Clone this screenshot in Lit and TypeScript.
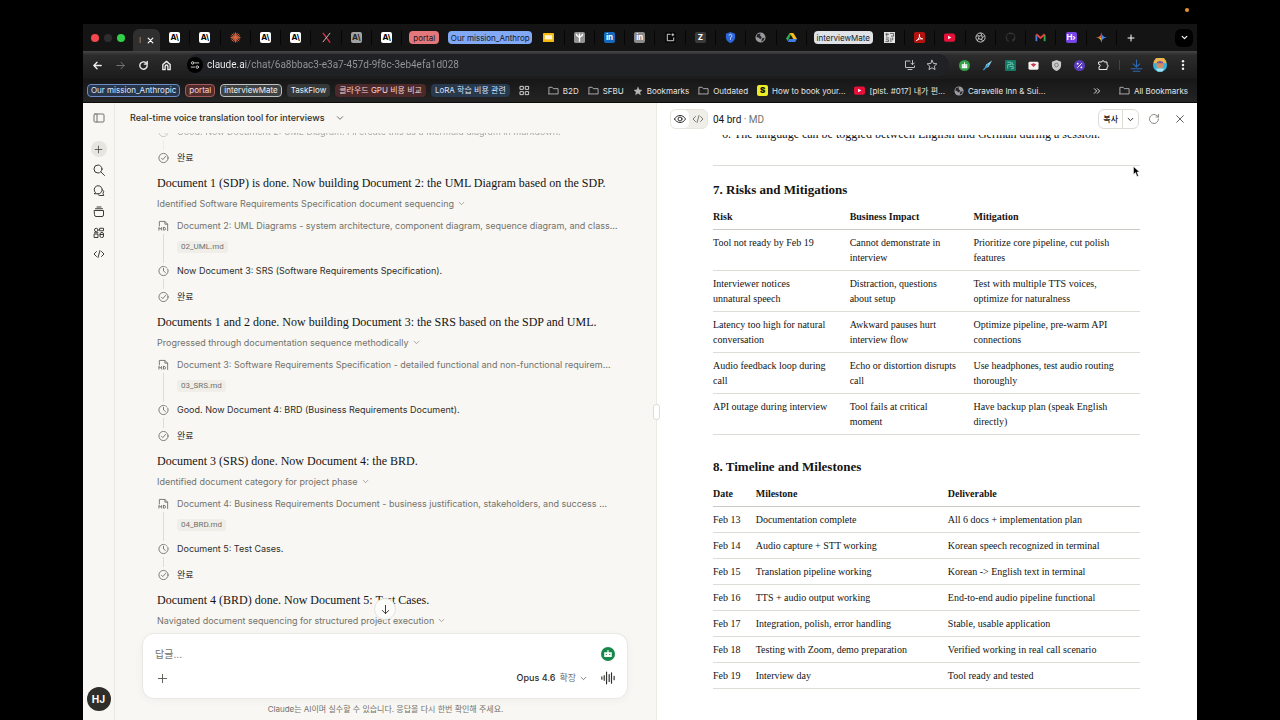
import { css, html, LitElement, svg, SVGTemplateResult, TemplateResult } from "lit";
import { customElement, property } from "lit/decorators.js";
import { classMap } from "lit/directives/class-map.js";

const shapes: Record<string, SVGTemplateResult> = {
  back: svg`<path d="M20 12H4M11 5l-7 7 7 7"/>`,
  forward: svg`<path d="M4 12h16M13 5l7 7-7 7"/>`,
  reload: svg`<path d="M20 12a8 8 0 1 1-2.4-5.7L20 8.5"/><path d="M20 3v6h-6"/>`,
  home: svg`<path d="M4 10l8-7 8 7v11h-5v-7a3 3 0 0 0-6 0v7H4z"/>`,
  tune: svg`<path d="M13 7h8M3 17h8"/><circle cx="6.500" cy="7" r="3"/><circle cx="17.500" cy="17" r="3"/>`,
  install: svg`<path d="M12 4H3v13h18v-3M8 21h8"/><path d="M17 3v8M13.500 8l3.500 3.500L20.500 8"/>`,
  star: svg`<path d="M12 2.500l2.900 6.400 6.900.7-5.200 4.700 1.500 6.900-6.100-3.600-6.100 3.600 1.500-6.900L2.200 9.600l6.900-.7z"/>`,
  starFull: svg`<path fill="currentColor" d="M12 3l2.800 6.200 6.700.7-5 4.500 1.400 6.600-5.900-3.400L6.100 21l1.400-6.600-5-4.500 6.700-.7z"/>`,
  puzzle: svg`<path d="M4 6h5.500a2.500 2.500 0 0 1 5 0H20v5a2.800 2.800 0 0 1 0 5.500V21H4v-5.500a2.500 2.500 0 0 0 0-5z"/>`,
  download: svg`<path d="M12 2v12M6 9l6 6 6-6M2 18h20M6 22.500h12"/>`,
  dots: svg`<g fill="currentColor" stroke="none"><circle cx="12" cy="3" r="3"/><circle cx="12" cy="12" r="3"/><circle cx="12" cy="21" r="3"/></g>`,
  grid: svg`<rect x="3" y="3" width="6.500" height="6.500"/><rect x="14.500" y="3" width="6.500" height="6.500"/><rect x="3" y="14.500" width="6.500" height="6.500"/><rect x="14.500" y="14.500" width="6.500" height="6.500"/>`,
  folder: svg`<path d="M2 19V5h7l2.500 3H22v11.500H2z"/>`,
  chevron: svg`<path d="M4 8l8 8 8-8"/>`,
  close: svg`<path d="M4 4l16 16M20 4L4 20"/>`,
  plus: svg`<path d="M12 3v18M3 12h18"/>`,
  more: svg`<path d="M4 5l7 7-7 7M13 5l7 7-7 7"/>`,
  panel: svg`<rect x="2" y="4" width="20" height="16" rx="2"/><path d="M8 4v16"/>`,
  search: svg`<circle cx="10" cy="10" r="8"/><path d="M16 16l7 7"/>`,
  chats: svg`<path d="M4.500 15A8 8 0 1 1 10 17.500H3z"/><path d="M18.500 9a6 6 0 0 1 1.500 8.500l1.500 3.500H14a6 6 0 0 1-4-2"/>`,
  projects: svg`<path d="M3 9h18v9a3 3 0 0 1-3 3H6a3 3 0 0 1-3-3zM5 5.500h14M8 2h8"/>`,
  artifacts: svg`<circle cx="6.500" cy="6" r="3.500"/><rect x="14" y="2.500" width="7" height="5"/><rect x="3" y="14" width="7" height="7"/><rect x="14" y="11" width="7" height="10" rx="3"/><path d="M3 11.500h7M14 15h7"/>`,
  code: svg`<path d="M7 7l-5 5 5 5M17 7l5 5-5 5M14 5l-4 14"/>`,
  check: svg`<circle cx="12" cy="12" r="10"/><path d="M7.500 12.500l3 3 6-7"/>`,
  clock: svg`<circle cx="12" cy="12" r="10" stroke-dasharray="48 3 3 3 3 3"/><path d="M12 6v6l4 3"/>`,
  file: svg`<path d="M3 12V2h12l6 6v14M15 2v6h6"/><path d="M2 21v-6l3 4 3-4v6M12 15v6h1.500a3 3 0 0 0 0-6z"/>`,
  down: svg`<path d="M12 3v18M5 14l7 7 7-7"/>`,
  eye: svg`<path d="M1 12c5-9.500 17-9.500 22 0-5 9.500-17 9.500-22 0z"/><circle cx="12" cy="12" r="4"/>`,
  wave: svg`<path d="M1.500 10v4M5.500 8v8M9.500 2v20M14 6v12M18 3v18M22.500 9v6"/>`,
  refresh: svg`<path d="M21 12a9 9 0 1 1-3-6.700L21 8"/><path d="M21 3v5h-5"/>`
};

const icon = (name: string, size = 12, weight = 2) => html`
  <svg width=${size} height=${size} viewBox="0 0 24 24" fill="none" stroke="currentColor"
    stroke-width=${weight} stroke-linecap="round" stroke-linejoin="round" aria-hidden="true">${shapes[name]}</svg>
`;

const logos: Record<string, SVGTemplateResult> = {
  burst: svg`<path stroke="#d9683f" stroke-width="2" d="M12 1v22M1 12h22M4 4l16 16M20 4L4 20M8 2l8 20M16 2L8 22M2 8l20 8M22 8L2 16"/>`,
  cross: svg`<path stroke="#e5304c" stroke-width="3" d="M4 2l16 21"/><path stroke="#d8c9cc" stroke-width="2" d="M20 2L4 22"/>`,
  slides: svg`<rect x="0" y="2" width="24" height="20" rx="2" fill="#f5b912"/><rect x="4" y="7" width="16" height="9" fill="#fff6d8"/>`,
  fork: svg`<rect width="24" height="24" rx="4" fill="#929292"/><path stroke="#fff" stroke-width="3" d="M5 4c0 7 7 4 7 9v8M19 4c0 7-7 4-7 9M12 3v8"/>`,
  note: svg`<rect width="24" height="24" rx="4" fill="#090909"/><path stroke="#ddd" stroke-width="2" d="M12 5H5v14h14v-7M17 3v6M14 6h6"/>`,
  shield: svg`<path fill="#2d66d8" d="M12 0l10 4v8c0 6-5 10-10 12C7 22 2 18 2 12V4z"/><path stroke="#cfe0ff" stroke-width="2" d="M9 8a3 3 0 1 1 4 3l-1 3v3"/>`,
  globe: svg`<circle cx="12" cy="12" r="11" fill="#9b9b9f"/><path fill="#26262a" d="M5 5l7-2-1 5 4 3-3 5-5-4-4-1zM15 14l6-2-2 6-5 3z"/>`,
  drive: svg`<path fill="#2bab53" d="M8 2h4l-8 18-4-6z"/><path fill="#f9bd16" d="M8 2h8l8 13h-8z"/><path fill="#3e7de8" d="M7 15h17l-4 7H4z"/>`,
  qr: svg`<rect width="24" height="24" fill="#e4e4e4"/><path stroke="#555" stroke-width="2" d="M3 5h8M6 2v8M4 13h7M13 3h8v6h-6M15 13v9M19 12v6M4 17h6v4H3"/>`,
  acrobat: svg`<rect width="24" height="24" rx="4" fill="#b3120f"/><path stroke="#fff" stroke-width="2" d="M5 19c5-3 8-9 7-14-2 5 2 10 7 10-5-1-10 1-14 4z"/>`,
  youtube: svg`<rect y="3" width="24" height="18" rx="4" fill="#e6103b"/><path fill="#fff" d="M9 8l7 4-7 4z"/>`,
  openai: svg`<g stroke="#cfcfcf" stroke-width="2"><circle cx="12" cy="12" r="10"/><circle cx="12" cy="12" r="4"/><path d="M12 2l4 7M21 8l-5 5M19 19l-7-3M5 20l3-7M3 9l6-1"/></g>`,
  github: svg`<path fill="#34373a" d="M12 1a11 11 0 0 0-4 21v-4c-3 1-4-2-5-3 2 0 3 2 5 1-5-1-6-8-2-10V3c2 0 3 2 6 2s4-2 6-2v3c4 3 3 9-2 10v6a11 11 0 0 0-4-21z"/>`,
  gmail: svg`<path stroke="#3f7ee8" stroke-width="4" d="M3 20V6"/><path stroke="#34a853" stroke-width="4" d="M21 20V6"/><path stroke="#e94335" stroke-width="4" d="M3 5l9 8 9-8"/>`,
  gemini: svg`<path fill="#4587ef" d="M12 0c1 8 4 11 12 12-8 1-11 4-12 12z"/><path fill="#e9564a" d="M12 0C11 8 8 11 0 12h12z"/><path fill="#f2bd2e" d="M0 12c8 1 11 4 12 12V12z"/>`,
  bot: svg`<circle cx="12" cy="12" r="12" fill="#35a24a"/><path fill="#fff" d="M6 9h12v9H6zM11 5h2v4h-2z"/><path stroke="#35a24a" stroke-width="2" d="M9 12v2M15 12v2"/>`,
  feather: svg`<path fill="#8ed6ef" d="M22 1L9 10l-3 8 8-3z"/><path stroke="#3a93cf" stroke-width="3" d="M3 22l11-12"/>`,
  chip: svg`<rect width="24" height="24" rx="2" fill="#137764"/><path stroke="#74cdb9" stroke-width="2" d="M5 5h8v5H6v9M16 5v5h3M10 14h8v5h-5"/>`,
  mail: svg`<rect x="1" y="4" width="22" height="17" rx="3" fill="#f5f1f1"/><path fill="#c9344a" d="M6 9l6 6 6-6-6-2z"/>`,
  badge: svg`<path fill="#c6c8ca" d="M12 0l10 4v8c0 6-5 10-10 12C7 22 2 18 2 12V4z"/><circle cx="12" cy="11" r="4" stroke="#77797c" stroke-width="2"/>`,
  percent: svg`<circle cx="12" cy="12" r="12" fill="#5a3dbd"/><path stroke="#fff" stroke-width="2" d="M17 7L7 17"/><circle cx="8" cy="8" r="2" fill="#fff"/><circle cx="16" cy="16" r="2" fill="#fff"/>`,
  face: svg`<circle cx="12" cy="12" r="12" fill="#36b3dd"/><path fill="#e9b54d" d="M1 9a11 11 0 0 1 22 0z"/><circle cx="12" cy="12" r="6" fill="#d58c62"/><path fill="#7b4fa3" d="M6 9c2-5 10-5 12 0z"/><path fill="#a8e2f2" d="M5 18h14l-3 5H8z"/>`,
  robot: svg`<circle cx="12" cy="12" r="12" fill="#16884b"/><path fill="#fff" d="M5.500 9h13v8h-13zM11 5h2v4h-2z"/><path stroke="#16884b" stroke-width="2" d="M9 12v1.500M15 12v1.500"/>`
};

const logo = (name: string, size = 11) => html`
  <svg width=${size} height=${size} viewBox="0 0 24 24" fill="none" aria-hidden="true">${logos[name]}</svg>
`;

// letter marks are [text, class]; everything else is a key of `logos`
type Mark = string | [string, string];
const mark = (m: Mark) => typeof m === 'string' ? logo(m) : html`<span class="mark ${m[1]}">${m[0]}</span>`;

const tabs: Mark[][] = [
  [['A\\', 'white'], ['A\\', 'white'], 'burst', ['A\\', 'white'], ['A\\', 'white'], 'cross', ['A\\', 'grey'], ['A\\', 'white']],
  ['slides', 'fork', ['in', 'blue'], ['in', 'ash'], 'note', ['Z', 'dark'], 'shield', 'globe', 'drive'],
  ['qr', 'acrobat', 'youtube', 'openai', 'github', 'gmail', ['H›', 'violet'], 'gemini']
];

@customElement('browser-chrome')
export class BrowserChrome extends LitElement {
  static styles = css`
    :host {
      display: block;
      color: #dcdcdc;
      font: 8px/12px Inter, "Noto Sans CJK KR", sans-serif;
      border-bottom: 1px solid #0c0b08;
    }
    svg { display: block; flex: none; }
    button {
      font: inherit;
      color: inherit;
      background: none;
      border: 0;
      padding: 0;
      display: flex;
      align-items: center;
      justify-content: center;
    }
    .strip, .toolbar, .bookmarks { display: flex; align-items: center; }
    .strip { height: 27px; background: #141414; }
    .lights { display: flex; gap: 5px; width: 50px; padding-left: 8px; box-sizing: border-box; }
    .lights i { width: 8px; height: 8px; border-radius: 50%; background: #2d2d2d; }
    .lights .red { background: #f2474c; }
    .lights .green { background: #32d046; }
    .active {
      width: 27px;
      height: 22px;
      align-self: flex-end;
      background: #2f2f2f;
      border-radius: 6px 6px 0 0;
      display: flex;
      align-items: center;
      justify-content: space-evenly;
      color: #9a9a9a;
    }
    .active button { color: #fff; }
    .tab { flex: 1; height: 15px; border-right: 1px solid #060606; }
    .mark {
      width: 11px;
      height: 11px;
      border-radius: 2px;
      font: 700 8px/11px Inter, sans-serif;
      text-align: center;
      overflow: hidden;
    }
    .white { background: #fff; color: #000; }
    .grey { background: #a2a2a2; color: #222; }
    .blue { background: #1468bd; color: #fff; }
    .ash { background: #8b8b8b; color: #fff; }
    .dark { background: #383a3c; color: #fff; }
    .violet { background: #7445e5; color: #fff; }
    .yellow { background: #eded26; color: #111; font-weight: 900; }
    .group {
      height: 13px;
      margin: 0 2px 0 7px;
      border-radius: 4px;
      color: #17181a;
      background: #dfe2e6;
      width: 59px;
      white-space: nowrap;
    }
    .group.rose { background: #e4777c; width: 30px; }
    .group.sky { background: #81a9f6; width: 84px; }
    .new { width: 28px; color: #fff; }
    .search { width: 18px; height: 18px; margin: 0 4px 0 30px; border-radius: 6px; background: #000; color: #fff; }
    .toolbar {
      height: 28px;
      background: linear-gradient(#474747, #2c2c2c 4px, #1b1b1b);
      color: #ececec;
      box-sizing: border-box;
      padding: 0 3px;
    }
    .nav { width: 23px; }
    .dim { color: #7a7a7a; }
    .omnibox {
      flex: 1;
      display: flex;
      align-items: center;
      height: 22px;
      margin: 0 4px 0 9px;
      border-radius: 11px;
      background: #202124;
      padding-right: 8px;
      gap: 4px;
    }
    .site { width: 16px; height: 16px; border-radius: 50%; background: #000; }
    .omnibox input {
      flex: 1;
      min-width: 0;
      border: 0;
      padding: 0;
      outline: 0;
      font: 10px/16px Roboto, sans-serif;
      color: transparent;
      background: linear-gradient(90deg, #f4f4f4 39px, #96979a 39px);
      -webkit-background-clip: text;
      background-clip: text;
    }
    .action { width: 18px; color: #bdbdbd; }
    .rule { width: 1px; height: 10px; background: #444; margin: 0 5px; }
    .save { color: #2f6ab7; }
    .bookmarks {
      height: 23px;
      padding: 0 9px 0 4px;
      background: linear-gradient(#171717, #242424);
      white-space: nowrap;
      gap: 9px;
    }
    .chips { display: flex; gap: 5px; }
    .chip {
      height: 13px;
      box-sizing: border-box;
      padding: 0 3px;
      border: 1px solid transparent;
      border-radius: 4px;
      line-height: 11px;
      background: #353838;
      color: #eef0f2;
    }
    .navy { background: #27364d; border-color: #6b8cc4; color: #dfe9fd; }
    .wine { background: #512b2c; border-color: #a5595b; color: #f8d8d9; }
    .slate { background: #3f4242; border-color: #bcc0c0; }
    .brick { background: #4b292b; color: #f6d0d1; }
    .steel { background: #28384d; color: #d5e4fc; }
    .link { display: flex; align-items: center; gap: 4px; color: #e4e4e4; text-decoration: none; }
    .link svg { color: #b5b5b5; }
    .spacer { flex: 1; }
  `;

  private static tabGroup (marks: Mark[]) {
    return marks.map(m => html`<button class="tab" aria-label="Tab">${mark(m)}</button>`);
  }

  protected render() {
    const extensions = ['bot', 'feather', 'chip', 'mail', 'badge', 'percent'];
    return html`
      <div class="strip">
        <div class="lights"><i class="red"></i><i></i><i class="green"></i></div>
        <div class="active"><span>I</span><button aria-label="Close tab">${icon('close', 7, 4)}</button></div>
        ${BrowserChrome.tabGroup(tabs[0])}
        <button class="group rose">portal</button>
        <button class="group sky">Our mission_Anthrop</button>
        ${BrowserChrome.tabGroup(tabs[1])}
        <button class="group">interviewMate</button>
        ${BrowserChrome.tabGroup(tabs[2])}
        <button class="new" aria-label="New tab">${icon('plus', 8, 3)}</button>
        <button class="search" aria-label="Search tabs">${icon('chevron', 7, 4)}</button>
      </div>
      <div class="toolbar">
        <button class="nav" aria-label="Back">${icon('back', 11, 3)}</button>
        <button class="nav dim" aria-label="Forward">${icon('forward', 11, 2)}</button>
        <button class="nav" aria-label="Reload">${icon('reload', 11, 3)}</button>
        <button class="nav" aria-label="Home">${icon('home', 11, 3)}</button>
        <div class="omnibox">
          <button class="site" aria-label="Site information">${icon('tune', 10, 2)}</button>
          <input type="text" aria-label="Address" value="claude.ai/chat/6a8bbac3-e3a7-457d-9f8c-3eb4efa1d028" />
          <button class="action" aria-label="Install">${icon('install', 12)}</button>
          <button class="action" aria-label="Bookmark this page">${icon('star', 12)}</button>
        </div>
        ${extensions.map(name => html`<button class="nav" aria-label=${name}>${logo(name, 11)}</button>`)}
        <button class="nav" aria-label="Extensions">${icon('puzzle', 12)}</button>
        <span class="rule"></span>
        <button class="nav save" aria-label="Downloads">${icon('download', 13)}</button>
        <button class="nav" aria-label="Profile">${logo('face', 14)}</button>
        <button class="nav" aria-label="Menu">${icon('dots', 10)}</button>
      </div>
      <div class="bookmarks">
        <div class="chips">
          <button class="chip navy">Our mission_Anthropic</button>
          <button class="chip wine">portal</button>
          <button class="chip slate">interviewMate</button>
          <button class="chip">TaskFlow</button>
          <button class="chip brick">클라우드 GPU 비용 비교</button>
          <button class="chip steel">LoRA 학습 비용 관련</button>
        </div>
        <button aria-label="Apps">${icon('grid', 11)}</button>
        <span></span>
        <a class="link" href="#">${icon('folder', 11)}B2D</a>
        <a class="link" href="#">${icon('folder', 11)}SFBU</a>
        <a class="link" href="#">${icon('starFull', 10, 1)}Bookmarks</a>
        <a class="link" href="#">${icon('folder', 11)}Outdated</a>
        <a class="link" href="#">${mark(['S', 'yellow'])}How to book your...</a>
        <a class="link" href="#">${logo('youtube', 11)}[plst. #017] 내가 편...</a>
        <a class="link" href="#">${logo('globe', 10)}Caravelle Inn &amp; Sui...</a>
        <span class="spacer"></span>
        <button aria-label="More bookmarks">${icon('more', 8, 3)}</button>
        <span></span>
        <a class="link" href="#">${icon('folder', 11)}All Bookmarks</a>
      </div>
    `;
  }
}

interface Turn {
  heading: string;
  summary: string;
  doc?: string;
  file?: string;
  step?: string;
}

const turns: Turn[] = [
  {
    heading: 'Document 1 (SDP) is done. Now building Document 2: the UML Diagram based on the SDP.',
    summary: 'Identified Software Requirements Specification document sequencing',
    doc: 'Document 2: UML Diagrams - system architecture, component diagram, sequence diagram, and class…',
    file: '02_UML.md',
    step: 'Now Document 3: SRS (Software Requirements Specification).'
  },
  {
    heading: 'Documents 1 and 2 done. Now building Document 3: the SRS based on the SDP and UML.',
    summary: 'Progressed through documentation sequence methodically',
    doc: 'Document 3: Software Requirements Specification - detailed functional and non-functional requirem…',
    file: '03_SRS.md',
    step: 'Good. Now Document 4: BRD (Business Requirements Document).'
  },
  {
    heading: 'Document 3 (SRS) done. Now Document 4: the BRD.',
    summary: 'Identified document category for project phase',
    doc: 'Document 4: Business Requirements Document - business justification, stakeholders, and success …',
    file: '04_BRD.md',
    step: 'Document 5: Test Cases.'
  },
  {
    heading: 'Document 4 (BRD) done. Now Document 5: Test Cases.',
    summary: 'Navigated document sequencing for structured project execution'
  }
];

@customElement('chat-thread')
export class ChatThread extends LitElement {
  @property({
    attribute: false
  }) turns: Turn[] = [];

  static styles = css`
    :host {
      display: flex;
      flex-direction: column;
      min-width: 0;
      min-height: 0;
      color: #2f2e2b;
      font: 9px/20px Inter, "Noto Sans CJK KR", sans-serif;
    }
    svg { display: block; flex: none; }
    button { font: inherit; color: inherit; background: none; border: 0; padding: 0; display: flex; align-items: center; }
    .title { height: 30px; padding: 0 15px; gap: 11px; font-weight: 500; flex: none; }
    .thread {
      flex: 1;
      min-height: 0;
      overflow: hidden;
      display: flex;
      flex-direction: column;
      justify-content: flex-end;
      padding: 0 42px;
      white-space: nowrap;
    }
    h2 { margin: 0; font: 500 12px/20px "Liberation Serif", serif; color: #141413; }
    .summary { height: 21px; margin-bottom: 2px; gap: 4px; color: #73726c; }
    .turn:last-child .summary { margin: 0; }
    .step { display: grid; grid-template-columns: 12px 1fr; column-gap: 8px; }
    .rail { display: flex; flex-direction: column; align-items: center; color: #73726c; }
    .rail svg { height: 20px; }
    .line { flex: 1; width: 1px; margin: -2px 0; background: #dddcd6; }
    .doc { color: #73726c; padding-bottom: 8px; }
    .file {
      display: block;
      width: max-content;
      margin-top: 5px;
      padding: 0 4px;
      border-radius: 3px;
      background: #efeee9;
      font: 8px/12px Roboto, sans-serif;
    }
    .note { padding-bottom: 6px; }
    .last { padding-bottom: 5px; }
    .faded { opacity: .4; }
    .composer {
      position: relative;
      flex: none;
      display: grid;
      grid-template-columns: 1fr auto;
      align-items: center;
      margin: 2px 28px 0 27px;
      height: 66px;
      box-sizing: border-box;
      padding: 8px 12px;
      border: 1px solid #e9e8e3;
      border-radius: 12px;
      background: #fff;
      box-shadow: 0 2px 8px #0000000a;
    }
    .composer input { border: 0; outline: 0; padding: 0; font: inherit; font-size: 10px; background: none; min-width: 0; }
    .composer input::placeholder { color: #73726c; }
    .end { justify-self: end; display: flex; align-items: center; gap: 14px; }
    .attach { padding-left: 2px; color: #55544f; }
    .model { gap: 4px; font-weight: 500; }
    .model span { color: #73726c; font-weight: 400; }
    .jump {
      position: absolute;
      left: calc(50% - 11px);
      top: -36px;
      width: 22px;
      height: 22px;
      justify-content: center;
      border-radius: 50%;
      background: #fcfcfa;
      border: 1px solid #e4e3de;
      box-sizing: border-box;
    }
    .hint { flex: none; margin: 0; height: 21px; line-height: 21px; font-size: 8px; text-align: center; color: #73726c; }
  `;

  private static step (name: string, kind: string, body: TemplateResult | string, linked = true) {
    return html`
      <div class="step">
        <div class="rail">${icon(name, 11)}${linked ? html`<i class="line"></i>` : ''}</div>
        <div class=${classMap({ [kind]: true })}>${body}</div>
      </div>
    `;
  }

  private static turn (turn: Turn) {
    return html`
      <section class="turn">
        <h2>${turn.heading}</h2>
        <button class="summary">${turn.summary}${icon('chevron', 7)}</button>
        ${turn.doc ? html`
          ${this.step('file', 'doc', html`${turn.doc}<span class="file">${turn.file}</span>`)}
          ${this.step('clock', 'note', turn.step!)}
          ${this.step('check', 'last', '완료', false)}
        ` : ''}
      </section>
    `;
  }

  protected render() {
    return html`
      <button class="title">Real-time voice translation tool for interviews ${icon('chevron', 8)}</button>
      <div class="thread">
        <div class="faded">
          ${ChatThread.step('clock', 'note', "Good. Now Document 2: UML Diagram. I'll create this as a Mermaid diagram in markdown.")}
        </div>
        ${ChatThread.step('check', 'last', '완료', false)}
        ${this.turns.map(turn => ChatThread.turn(turn))}
      </div>
      <div class="composer">
        <input type="text" aria-label="답글" placeholder="답글..." />
        <div class="end">${logo('robot', 14)}</div>
        <button class="attach" aria-label="Add">${icon('plus', 11)}</button>
        <div class="end">
          <button class="model">Opus 4.6 <span>확장</span>${icon('chevron', 7)}</button>
          <button aria-label="Voice">${icon('wave', 14)}</button>
        </div>
        <button class="jump" aria-label="Scroll to bottom">${icon('down', 11)}</button>
      </div>
      <p class="hint">Claude는 AI이며 실수할 수 있습니다. 응답을 다시 한번 확인해 주세요.</p>
    `;
  }
}

const risks = [
  ['Tool not ready by Feb 19', 'Cannot demonstrate in\ninterview', 'Prioritize core pipeline, cut polish\nfeatures'],
  ['Interviewer notices\nunnatural speech', 'Distraction, questions\nabout setup', 'Test with multiple TTS voices,\noptimize for naturalness'],
  ['Latency too high for natural\nconversation', 'Awkward pauses hurt\ninterview flow', 'Optimize pipeline, pre-warm API\nconnections'],
  ['Audio feedback loop during\ncall', 'Echo or distortion disrupts\ncall', 'Use headphones, test audio routing\nthoroughly'],
  ['API outage during interview', 'Tool fails at critical\nmoment', 'Have backup plan (speak English\ndirectly)']
];

const milestones = [
  ['Feb 13', 'Documentation complete', 'All 6 docs + implementation plan'],
  ['Feb 14', 'Audio capture + STT working', 'Korean speech recognized in terminal'],
  ['Feb 15', 'Translation pipeline working', 'Korean -> English text in terminal'],
  ['Feb 16', 'TTS + audio output working', 'End-to-end audio pipeline functional'],
  ['Feb 17', 'Integration, polish, error handling', 'Stable, usable application'],
  ['Feb 18', 'Testing with Zoom, demo preparation', 'Verified working in real call scenario'],
  ['Feb 19', 'Interview day', 'Tool ready and tested']
];

@customElement('doc-preview')
export class DocPreview extends LitElement {
  static styles = css`
    :host {
      position: relative;
      display: flex;
      flex-direction: column;
      min-width: 0;
      min-height: 0;
      background: #fff;
      border-left: 1px solid #ebeae5;
      color: #141413;
      font: 10px/15px "Liberation Serif", serif;
    }
    svg { display: block; flex: none; }
    button { font: inherit; color: inherit; background: none; border: 0; padding: 0; display: flex; align-items: center; justify-content: center; }
    header {
      flex: none;
      display: flex;
      align-items: center;
      height: 32px;
      padding: 0 11px 0 13px;
      font-family: Roboto, "Noto Sans CJK KR", sans-serif;
    }
    .toggle { display: flex; border: 1px solid #e6e5df; border-radius: 6px; background: #efeee8; margin-right: 5px; }
    .toggle button { width: 18px; height: 18px; border-radius: 5px; color: #7b7a74; }
    .toggle .on { background: #fff; color: #2f2e2b; }
    .name { flex: 1; }
    .name span { color: #73726c; }
    .copy { display: flex; height: 20px; box-sizing: border-box; border: 1px solid #dddcd7; border-radius: 6px; font-size: 8px; font-weight: 500; margin-right: 8px; }
    .copy button { padding: 0 4px; }
    .copy button + button { border-left: 1px solid #dddcd7; }
    .tool { width: 13px; margin-right: 13px; color: #8a8984; }
    .tool:last-child { margin-right: 0; color: #44433f; }
    .page {
      flex: 1;
      min-height: 0;
      overflow: hidden;
      display: flex;
      flex-direction: column;
      justify-content: flex-end;
      padding: 0 57px 31px 56px;
    }
    ol { margin: 0; padding-left: 21px; line-height: 18px; white-space: nowrap; font-size: 12px; }
    hr { width: 100%; margin: 22px 0 14px; border: 0; border-top: 1px solid #dddcd7; }
    h2 { margin: 0 0 4px; font-size: 13px; line-height: 20px; font-weight: 700; }
    table { width: 100%; table-layout: fixed; border-collapse: separate; border-spacing: 0; }
    table + h2 { margin-top: 22px; }
    th, td { box-sizing: border-box; padding: 5px 8px 5px 0; text-align: left; vertical-align: top; white-space: pre; border-bottom: 1px solid #dddcd7; }
    th { border-color: #c9c8c3; }
    .w10 { width: 10%; }
    .w29 { width: 29%; }
    .w32 { width: 32%; }
    .w45 { width: 45%; }
    .pointer { position: absolute; right: 57px; top: 63px; }
    .split { position: absolute; left: -4px; top: calc(50% - 8px); width: 7px; height: 16px; box-sizing: border-box; border: 1px solid #dddcd7; border-radius: 3px; background: #fff; }
  `;

  private static table (head: string[], widths: string[], rows: string[][]) {
    return html`
      <table>
        <thead><tr>${head.map((cell, i) => html`<th class=${widths[i]}>${cell}</th>`)}</tr></thead>
        <tbody>${rows.map(row => html`<tr>${row.map(cell => html`<td>${cell}</td>`)}</tr>`)}</tbody>
      </table>
    `;
  }

  protected render() {
    return html`
      <header>
        <div class="toggle">
          <button class="on" aria-label="Preview">${icon('eye', 12)}</button>
          <button aria-label="Code">${icon('code', 12)}</button>
        </div>
        <div class="name">04 brd <span>· MD</span></div>
        <div class="copy">
          <button>복사</button>
          <button aria-label="Copy options">${icon('chevron', 7, 3)}</button>
        </div>
        <button class="tool" aria-label="Refresh">${icon('refresh', 12)}</button>
        <button class="tool" aria-label="Close">${icon('close', 10)}</button>
      </header>
      <div class="page">
        <ol start="6"><li>The language can be toggled between English and German during a session.</li></ol>
        <hr />
        <h2>7. Risks and Mitigations</h2>
        ${DocPreview.table(['Risk', 'Business Impact', 'Mitigation'], ['w32', 'w29', ''], risks)}
        <h2>8. Timeline and Milestones</h2>
        ${DocPreview.table(['Date', 'Milestone', 'Deliverable'], ['w10', 'w45', ''], milestones)}
      </div>
      <span class="split" role="separator"></span>
      <svg class="pointer" width="7" height="11" viewBox="0 0 14 22" aria-hidden="true">
        <path d="M1 1v16l4-4 3 8 3-1-3-8h5z" fill="#000" stroke="#fff" stroke-width="1" />
      </svg>
    `;
  }
}

@customElement('app-root')
export class AppRoot extends LitElement {
  static styles = css`
    :host {
      display: flex;
      flex-direction: column;
      height: 100vh;
      box-sizing: border-box;
      padding: 0 83px;
      background: #000;
    }
    .menubar { flex: none; height: 24px; display: flex; justify-content: flex-end; }
    .recording { width: 4px; height: 4px; margin: 8px 8px 0 0; border-radius: 50%; background: #e8932d; }
    browser-chrome { flex: none; }
    .window { flex: 1; min-height: 0; display: grid; grid-template-columns: 32px 1fr 1fr; grid-template-rows: 100%; background: #f8f7f3; }
    nav { display: flex; flex-direction: column; align-items: center; border-right: 1px solid #e9e8e3; color: #3d3c38; }
    nav button {
      width: 16px;
      height: 16px;
      margin: 0 0 5px;
      padding: 0;
      border: 0;
      border-radius: 50%;
      background: none;
      color: inherit;
      display: flex;
      align-items: center;
      justify-content: center;
    }
    nav .collapse { margin: 7px 0 15px; color: #73726c; }
    nav .new { background: #e6e5df; }
    nav .account {
      width: 24px;
      height: 24px;
      margin: auto 0 9px;
      background: #2f2e2b;
      color: #fff;
      font: 700 10px/24px Inter, sans-serif;
    }
  `;

  protected render() {
    return html`
      <div class="menubar"><span class="recording"></span></div>
      <browser-chrome></browser-chrome>
      <div class="window">
        <nav>
          <button class="collapse" aria-label="Toggle sidebar">${icon('panel', 12)}</button>
          <button class="new" aria-label="New chat">${icon('plus', 9)}</button>
          <button aria-label="Search">${icon('search', 12)}</button>
          <button aria-label="Chats">${icon('chats', 12)}</button>
          <button aria-label="Projects">${icon('projects', 12)}</button>
          <button aria-label="Artifacts">${icon('artifacts', 12)}</button>
          <button aria-label="Code">${icon('code', 12)}</button>
          <button class="account">HJ</button>
        </nav>
        <chat-thread .turns=${turns}></chat-thread>
        <doc-preview></doc-preview>
      </div>
    `;
  }
}
